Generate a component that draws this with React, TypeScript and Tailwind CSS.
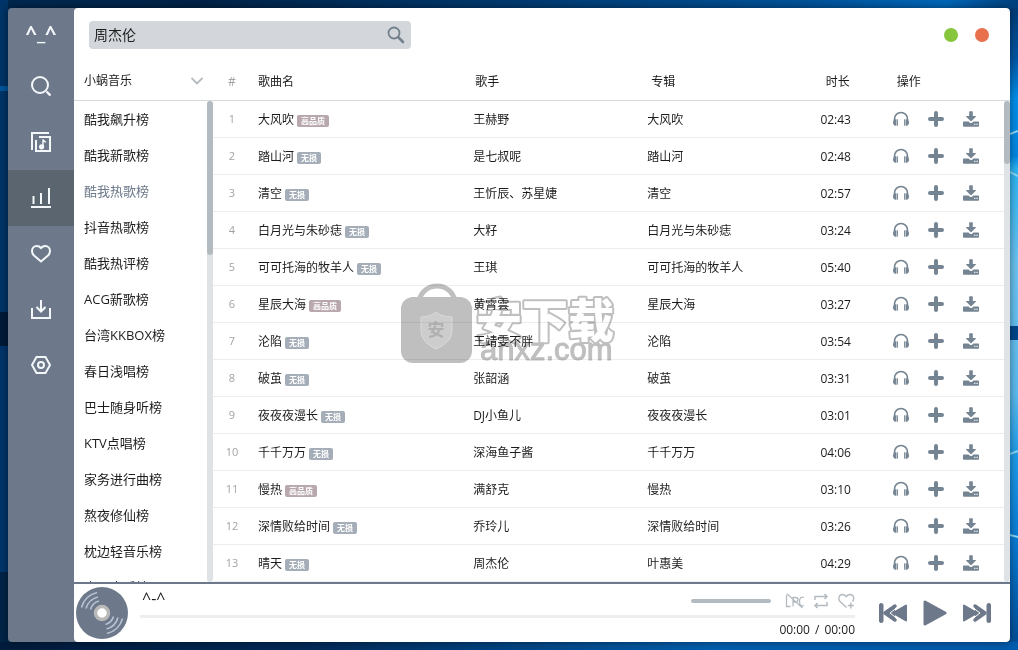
import { useState } from 'react'
import type { ReactNode } from 'react'
import clsx from 'clsx'

interface Song {
  name: string
  quality: '高品质' | '无损'
  singer: string
  album: string
  duration: string
}

const songs: Song[] = [
  { name: '大风吹', quality: '高品质', singer: '王赫野', album: '大风吹', duration: '02:43' },
  { name: '踏山河', quality: '无损', singer: '是七叔呢', album: '踏山河', duration: '02:48' },
  { name: '清空', quality: '无损', singer: '王忻辰、苏星婕', album: '清空', duration: '02:57' },
  { name: '白月光与朱砂痣', quality: '无损', singer: '大籽', album: '白月光与朱砂痣', duration: '03:24' },
  { name: '可可托海的牧羊人', quality: '无损', singer: '王琪', album: '可可托海的牧羊人', duration: '05:40' },
  { name: '星辰大海', quality: '高品质', singer: '黄霄雲', album: '星辰大海', duration: '03:27' },
  { name: '沦陷', quality: '无损', singer: '王靖雯不胖', album: '沦陷', duration: '03:54' },
  { name: '破茧', quality: '无损', singer: '张韶涵', album: '破茧', duration: '03:31' },
  { name: '夜夜夜漫长', quality: '无损', singer: 'DJ小鱼儿', album: '夜夜夜漫长', duration: '03:01' },
  { name: '千千万万', quality: '无损', singer: '深海鱼子酱', album: '千千万万', duration: '04:06' },
  { name: '慢热', quality: '高品质', singer: '满舒克', album: '慢热', duration: '03:10' },
  { name: '深情败给时间', quality: '无损', singer: '乔玲儿', album: '深情败给时间', duration: '03:26' },
  { name: '晴天', quality: '无损', singer: '周杰伦', album: '叶惠美', duration: '04:29' }
]

const charts = [
  '酷我飙升榜',
  '酷我新歌榜',
  '酷我热歌榜',
  '抖音热歌榜',
  '酷我热评榜',
  'ACG新歌榜',
  '台湾KKBOX榜',
  '春日浅唱榜',
  '巴士随身听榜',
  'KTV点唱榜',
  '家务进行曲榜',
  '熬夜修仙榜',
  '枕边轻音乐榜',
  '古风音乐榜'
]

const navItems: { id: string; label: string; icon: ReactNode }[] = [
  {
    id: 'search',
    label: '搜索',
    icon: (
      <>
        <circle cx="9" cy="9" r="8" />
        <path d="M15.5 15.5 19.5 19.5" strokeWidth="2.4" />
      </>
    )
  },
  {
    id: 'library',
    label: '歌单',
    icon: (
      <>
        <path d="M1 18V1H18" />
        <path d="M8 5H19V19H5V8" />
        <path d="M12 15V7.5c.5 1.8 1.5 2.2 3 2.6" strokeWidth="1.5" />
        <circle cx="10.6" cy="14.8" r="1.6" fill="currentColor" />
      </>
    )
  },
  {
    id: 'charts',
    label: '排行榜',
    icon: <path d="M0 19H20M2.5 16V8M10 16V5M18 16V0" />
  },
  {
    id: 'favorites',
    label: '收藏',
    icon: <path d="M10 17.5 3 11.5C1.5 10 1 8.500 1 7 1 4 3 2 5.800 2 7.500 2 9 2.800 10 4 11 2.800 12.500 2 14.200 2 17 2 19 4 19 7c0 1.500-.5 3-2 4.500Z" />
  },
  {
    id: 'downloads',
    label: '下载',
    icon: (
      <>
        <path d="M1 8V18H19V8" />
        <path d="M10 0V11M5.500 7 10 11.500 14.500 7" />
      </>
    )
  },
  {
    id: 'settings',
    label: '设置',
    icon: (
      <>
        <path d="M5.500 1H14.500L19 9 14.500 17H5.500L1 9Z" />
        <circle cx="10" cy="9" r="3" />
      </>
    )
  }
]

function Desktop() {
  return (
    <svg className="absolute inset-0 h-full w-full" viewBox="0 0 1018 650" preserveAspectRatio="none" aria-hidden="true">
      <defs>
        <linearGradient id="sky" x1="0" x2="1" y1="0" y2="0">
          <stop offset="0" stopColor="#002850" />
          <stop offset="0.2" stopColor="#002348" />
          <stop offset="0.5" stopColor="#003a70" />
          <stop offset="0.8" stopColor="#00549c" />
          <stop offset="0.93" stopColor="#0068ba" />
          <stop offset="1" stopColor="#003f7c" />
        </linearGradient>
        <linearGradient id="edge" x1="0" x2="0" y1="0" y2="1">
          <stop offset="0" stopColor="#003b76" />
          <stop offset="0.08" stopColor="#0058a8" />
          <stop offset="0.14" stopColor="#0090ec" />
          <stop offset="0.23" stopColor="#0087e2" />
          <stop offset="0.25" stopColor="#2ab4f4" />
          <stop offset="0.4" stopColor="#6cc4f2" />
          <stop offset="0.6" stopColor="#5cbcf0" />
          <stop offset="0.7" stopColor="#1c9cea" />
          <stop offset="0.82" stopColor="#0a7ed8" />
          <stop offset="1" stopColor="#004c96" />
        </linearGradient>
        <linearGradient id="floor" x1="0" x2="1" y1="0" y2="0">
          <stop offset="0" stopColor="#001c3c" />
          <stop offset="0.3" stopColor="#002a58" />
          <stop offset="0.7" stopColor="#0060b0" />
          <stop offset="1" stopColor="#005cae" />
        </linearGradient>
      </defs>
      <rect width="1018" height="650" fill="url(#sky)" />
      <rect width="8" height="312" fill="#003468" />
      <rect y="86" width="8" height="5" fill="#00559c" />
      <rect y="312" width="8" height="34" fill="#001a38" />
      <rect y="346" width="8" height="226" fill="#00356c" />
      <rect y="572" width="8" height="78" fill="#002448" />
      <rect x="1010" y="8" width="8" height="642" fill="url(#edge)" />
      <rect x="1010" y="326" width="8" height="14" fill="#00478c" />
      <path d="M1010 134 1018 131M1010 172 1018 176M1010 454 1018 451M1010 535 1018 537" stroke="#8ad8fa" strokeWidth="2" />
      <rect y="642" width="1018" height="8" fill="url(#floor)" />
    </svg>
  )
}

function ScrollBar({ thumbClass }: { thumbClass: string }) {
  return (
    <div className="min-h-0 w-1.5 flex-1 rounded-full bg-[#dfe3e6]">
      <div className={clsx('w-full rounded-full bg-[#b3bbc1]', thumbClass)} />
    </div>
  )
}

function SongActions({ name }: { name: string }) {
  return (
    <div className="flex gap-[19px] text-[#758492]">
      <button type="button" aria-label={`试听 ${name}`}>
        <svg className="size-4" viewBox="0 0 16 16" fill="currentColor">
          <path d="M1.500 9.500V8a6.500 6.500 0 0 1 13 0v1.500" fill="none" stroke="currentColor" strokeWidth="1.600" />
          <path d="M3.500 8.300v6.400H2.500C1 14.700 0 13.500 0 11.600 0 9.800 1 8.500 2.500 8.300Z" />
          <path d="M12.500 8.300v6.400h1c1.500 0 2.500-1.200 2.500-3.100 0-1.800-1-3.100-2.500-3.300Z" />
          <path d="M4.500 8.300V14.700M11.500 8.300V14.700" stroke="currentColor" strokeWidth=".9" />
        </svg>
      </button>
      <button type="button" aria-label={`添加 ${name}`}>
        <svg className="size-4" viewBox="0 0 16 16" stroke="currentColor" strokeWidth="4" strokeLinecap="round">
          <path d="M8 2V14M2 8H14" />
        </svg>
      </button>
      <button type="button" aria-label={`下载 ${name}`}>
        <svg className="size-4" viewBox="0 0 16 16" fill="currentColor">
          <path d="M6.200.8q0-.6.600-.6H9.200q.6 0 .6.600V5h2.700q.8 0 .3.700L8.500 10q-.5.500-1 0L3.200 5.700Q2.700 5 3.500 5H6.200Z" />
          <path d="M.8 10.500H5.500L6.900 11.700q1.100.8 2.200 0L10.500 10.500h4.700q.8 0 .8.800v3.700q0 .8-.8.800H.8Q0 15.800 0 15V11.300q0-.8.800-.8Zm10.400 2.200v1.200h1.200v-1.200Zm2.300 0v1.200h1.200v-1.200Z" fillRule="evenodd" />
        </svg>
      </button>
    </div>
  )
}

function Watermark() {
  return (
    <div className="pointer-events-none absolute inset-0 flex items-center justify-center mix-blend-multiply">
      <svg className="h-[84px] w-[216px]" viewBox="0 0 216 84" aria-hidden="true">
        <path d="M18 18C20 8 28 3 36 3s16 5 18 15" fill="none" stroke="#bfbfbf" strokeWidth="5" />
        <rect x="0" y="14" width="71" height="66" rx="12" fill="#bfbfbf" />
        <path d="M20 34q9 0 15-5 6 5 16 5v14q0 11-16 18-15-7-15-18Z" fill="#cdcdcd" stroke="#dadada" />
        <text x="35" y="53" textAnchor="middle" className="fill-[#b0b0b0] font-['Noto_Sans_CJK_SC',sans-serif] text-[17px] font-bold">
          安
        </text>
        <text
          x="75"
          y="54"
          strokeLinejoin="round"
          className="fill-white stroke-[#bfbfbf] stroke-[4px] font-['Noto_Sans_CJK_SC',sans-serif] text-[46px] font-black [paint-order:stroke]"
        >
          安下载
        </text>
        <text x="79" y="77" className="fill-[#bfbfbf] stroke-[#bfbfbf] font-['Liberation_Sans',sans-serif] text-[31px]">
          anxz.com
        </text>
      </svg>
    </div>
  )
}

function Player() {
  const [volume, setVolume] = useState(100)
  const [progress, setProgress] = useState(0)

  return (
    <footer className="flex h-[60px] shrink-0 items-center border-t-2 border-[#6d798a] pr-[19px] pl-0.5">
      <svg className="size-[52px] shrink-0" viewBox="0 0 52 52" aria-hidden="true">
        <circle cx="26" cy="26" r="26" fill="#6d798a" />
        <g fill="none" stroke="#b4c1d2" strokeWidth="1.700">
          <path d="M5.500 20.500A21 21 0 0 1 21 5.500M10 21.500A16.500 16.500 0 0 1 22 10M14.500 22.500A12 12 0 0 1 23 14" />
          <path d="M46.500 31.500A21 21 0 0 1 31 46.500M42 30.500A16.500 16.500 0 0 1 30.500 42M37.500 29.500A12 12 0 0 1 29.500 37.500" />
        </g>
        <circle cx="26" cy="26" r="6.500" fill="#fff" stroke="#b9b9b9" strokeWidth="3.500" />
      </svg>

      <div className="ml-3 flex flex-1 flex-col">
        <div className="flex h-[31px] items-center justify-between pt-0.5">
          <span className="self-start pl-0.5 text-base leading-6">^-^</span>
          <div className="flex items-center gap-2 text-[#b3bbc1]">
            <input
              type="range"
              aria-label="音量"
              value={volume}
              onChange={(e) => setVolume(Number(e.target.value))}
              className="mr-1.5 h-1 w-20 appearance-none rounded-full bg-[#b3bbc1] [&::-webkit-slider-thumb]:size-0 [&::-webkit-slider-thumb]:appearance-none"
            />
            <button type="button" aria-label="歌词">
              <svg className="h-4 w-5" viewBox="0 0 20 16" fill="none" stroke="currentColor" strokeWidth="1.300">
                <path d="M1.500 2V13.500H5.500M8 13.500V4.500H10.500q2.500 0 2.500 2.200T10.500 9H8M19 4.500Q14.500 3 14.500 8.500T19 12.500M2 .8 17.500 15" />
              </svg>
            </button>
            <button type="button" aria-label="循环播放">
              <svg className="size-4" viewBox="0 0 16 16" fill="none" stroke="currentColor" strokeWidth="1.500">
                <path d="M2 7V3.500H14M11.500 1 14 3.500 11.500 6M14 9V12.500H2M4.500 10 2 12.500 4.500 15" />
              </svg>
            </button>
            <button type="button" aria-label="收藏">
              <svg className="h-4 w-[18px]" viewBox="0 0 18 16" fill="none" stroke="currentColor" strokeWidth="1.400">
                <path d="M9.500 14.500 3.500 9C.5 6 2 1.500 5.500 1.500 7.500 1.500 8.500 2.500 9.200 3.500 10 2.500 11 1.500 13 1.500 16.500 1.500 18 5.500 15.500 8.500M13.800 9.500V15.500M10.800 12.500H16.800" />
              </svg>
            </button>
          </div>
        </div>
        <input
          type="range"
          aria-label="播放进度"
          value={progress}
          onChange={(e) => setProgress(Number(e.target.value))}
          className="h-[3px] w-full appearance-none bg-[#eeeeee] [&::-webkit-slider-thumb]:size-0 [&::-webkit-slider-thumb]:appearance-none"
        />
        <div className="flex h-6 items-center justify-end gap-[5px] text-xs">
          <span>00:00</span>
          <span>/</span>
          <span>00:00</span>
        </div>
      </div>

      <div className="ml-6 flex items-center gap-4 text-[#6d798a]">
        <button type="button" aria-label="上一首">
          <svg className="h-5 w-7" viewBox="0 0 28 20" fill="currentColor" stroke="currentColor" strokeLinejoin="round">
            <rect x=".5" y=".5" width="3.500" height="19" rx="1.500" />
            <path d="M27 2.500V17.500L14 10Z" strokeWidth="2" />
            <path d="M16 3 6 10 16 17" strokeWidth="3.500" strokeLinecap="round" />
            <path d="M19.500 3.500 11 10 19.500 16.500" fill="none" stroke="#fff" strokeWidth="1" />
          </svg>
        </button>
        <button type="button" aria-label="播放">
          <svg className="h-[26px] w-6" viewBox="0 0 24 26" fill="currentColor" stroke="currentColor" strokeLinejoin="round">
            <path d="M2 2V24L22 13Z" strokeWidth="3" />
          </svg>
        </button>
        <button type="button" aria-label="下一首">
          <svg className="h-5 w-7" viewBox="0 0 28 20" fill="currentColor" stroke="currentColor" strokeLinejoin="round">
            <rect x="24" y=".5" width="3.500" height="19" rx="1.500" />
            <path d="M1 2.500V17.500L14 10Z" strokeWidth="2" />
            <path d="M12 3 22 10 12 17" strokeWidth="3.500" strokeLinecap="round" />
            <path d="M8.500 3.500 17 10 8.500 16.500" fill="none" stroke="#fff" strokeWidth="1" />
          </svg>
        </button>
      </div>
    </footer>
  )
}

export default function App() {
  const [activeNav, setActiveNav] = useState('charts')
  const [activeChart, setActiveChart] = useState('酷我热歌榜')
  const [keyword, setKeyword] = useState('周杰伦')

  return (
    <div className="relative flex h-screen overflow-hidden p-2 font-['Open_Sans','Noto_Sans_CJK_SC',sans-serif] text-xs text-[#1c1c1c]">
      <Desktop />

      <div className="relative flex min-w-0 flex-1 overflow-hidden rounded bg-[#6d798a] shadow-[0_0_8px_rgba(0,0,0,0.5)]">
        {/* Side navigation */}
        <nav className="flex w-[66px] shrink-0 flex-col text-[#f4f7fa]">
          <div className="flex h-[50px] items-center justify-center text-xl font-bold">^_^</div>
          {navItems.map((item) => (
            <button
              key={item.id}
              type="button"
              aria-label={item.label}
              onClick={() => setActiveNav(item.id)}
              className={clsx('flex h-14 items-center justify-center', activeNav === item.id && 'bg-[#5a6570]')}
            >
              <svg className="size-5" viewBox="0 0 20 20" fill="none" stroke="currentColor" strokeWidth="2">
                {item.icon}
              </svg>
            </button>
          ))}
        </nav>

        <main className="flex min-w-0 flex-1 flex-col rounded bg-white">
          <header className="flex h-[54px] shrink-0 items-center justify-between pr-[21px] pl-[15px]">
            <form className="flex h-7 w-[322px] items-center rounded-sm bg-[#d3d7dc] pr-1.5 pl-[5px]" onSubmit={(e) => e.preventDefault()}>
              <input
                type="text"
                aria-label="搜索歌曲"
                value={keyword}
                onChange={(e) => setKeyword(e.target.value)}
                className="min-w-0 flex-1 bg-transparent text-sm outline-none"
              />
              <button type="submit" aria-label="搜索">
                <svg className="size-[18px] text-[#72808c]" viewBox="0 0 18 18" fill="none" stroke="currentColor" strokeLinecap="round">
                  <circle cx="7" cy="7" r="5.500" strokeWidth="1.800" />
                  <path d="M11.500 11.500 16 16" strokeWidth="2.600" />
                </svg>
              </button>
            </form>
            <div className="flex gap-[17px]">
              <button type="button" aria-label="最小化" className="size-3.5 rounded-full bg-[#87c53d]" />
              <button type="button" aria-label="关闭" className="size-3.5 rounded-full bg-[#e9704d]" />
            </div>
          </header>

          <div className="flex min-h-0 flex-1">
            {/* Charts */}
            <section className="flex w-[139px] shrink-0 flex-col">
              <div className="relative flex h-[39px] shrink-0 items-center border-b border-[#d5dadd]">
                <select aria-label="音乐来源" className="h-full w-full appearance-none bg-transparent pl-2.5 text-xs outline-none">
                  <option>小蜗音乐</option>
                </select>
                <svg className="pointer-events-none absolute right-2.5 h-2 w-3" viewBox="0 0 12 8" fill="none" stroke="#b3bbc1" strokeWidth="1.800">
                  <path d="M.5 1 6 6.500 11.500 1" />
                </svg>
              </div>
              <div className="flex min-h-0 flex-1">
                <ul className="flex-1 overflow-hidden pt-px">
                  {charts.map((chart) => (
                    <li key={chart}>
                      <button
                        type="button"
                        onClick={() => setActiveChart(chart)}
                        className={clsx('h-9 w-full pl-2.5 text-left text-[13px]', activeChart === chart && 'text-[#6d798a]')}
                      >
                        {chart}
                      </button>
                    </li>
                  ))}
                </ul>
                <div className="flex flex-col">
                  <ScrollBar thumbClass="h-[32%]" />
                </div>
              </div>
            </section>

            {/* Songs */}
            <section className="min-w-0 flex-1 overflow-hidden">
              <table className="w-full table-fixed text-left">
                <colgroup>
                  <col className="w-[38px]" />
                  <col className="w-[27.2%]" />
                  <col className="w-[22%]" />
                  <col className="w-[18.4%]" />
                  <col className="w-[100px]" />
                  <col />
                </colgroup>
                <thead>
                  <tr className="h-[38px] border-b border-[#d5dadd]">
                    <th className="pt-0.5 text-center font-normal text-[#a3a3a3]">#</th>
                    <th className="pt-0.5 pl-[7px] font-normal">歌曲名</th>
                    <th className="pt-0.5 pl-[9px] font-normal">歌手</th>
                    <th className="pt-0.5 pl-[11px] font-normal">专辑</th>
                    <th className="pt-0.5 pl-1 text-center font-normal">时长</th>
                    <th className="pt-0.5 pl-[11px] font-normal">操作</th>
                  </tr>
                </thead>
                <tbody>
                  {songs.map((song, index) => (
                    <tr key={song.name} className="h-[37px] border-b border-[#ebeef0]">
                      <td className="pt-0.5 text-center text-[11px] text-[#a3a3a3]">{index + 1}</td>
                      <td className="pt-0.5 pl-[7px]">
                        <div className="flex items-center gap-[3px]">
                          {song.name}
                          <span
                            className={clsx(
                              'mt-0.5 rounded-xs px-1 text-[8px] leading-3 font-bold text-white',
                              song.quality === '无损' ? 'bg-[#a5aeb8]' : 'bg-[#b8a8ad]'
                            )}
                          >
                            {song.quality}
                          </span>
                        </div>
                      </td>
                      <td className="pt-0.5 pl-[7px]">{song.singer}</td>
                      <td className="pt-0.5 pl-[7px]">{song.album}</td>
                      <td className="pt-0.5 text-center">{song.duration}</td>
                      <td className="pl-[7px]">
                        <SongActions name={song.name} />
                      </td>
                    </tr>
                  ))}
                </tbody>
              </table>
            </section>
            <div className="flex flex-col">
              <div className="h-[39px] shrink-0 border-b border-[#d5dadd]" />
              <ScrollBar thumbClass="h-[13%]" />
            </div>
          </div>

          <Player />
        </main>
      </div>

      <Watermark />
    </div>
  )
}
